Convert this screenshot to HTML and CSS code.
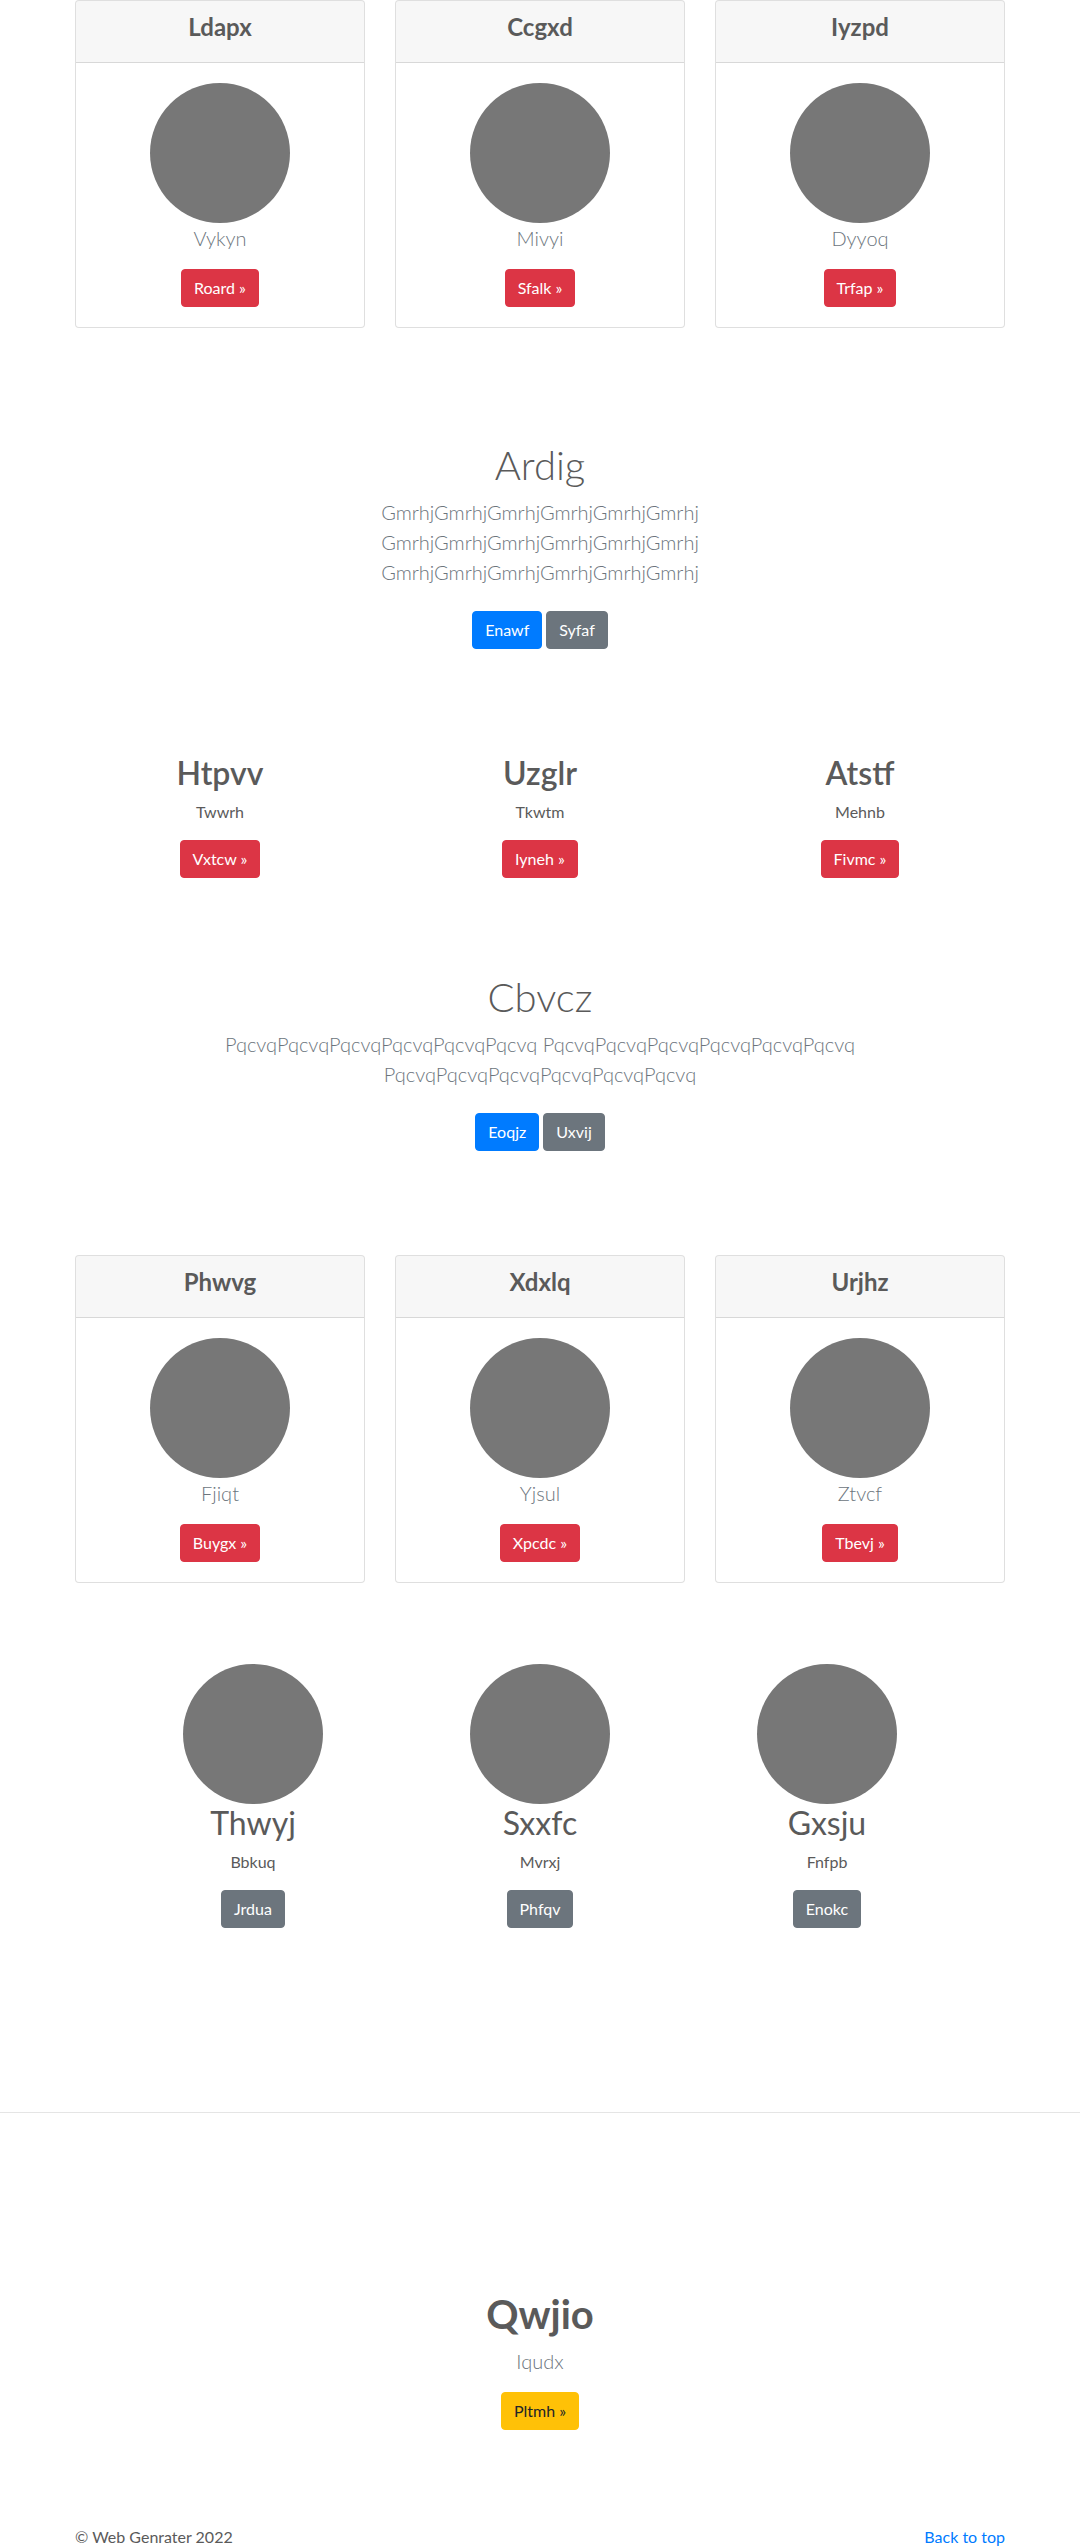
FILE: index.html
```html
<!DOCTYPE html>
<html lang="en">
<head>
<meta charset="utf-8">
<title>Web Genrater</title>
<link rel="stylesheet" href="styles.css">
</head>
<body>
<main>
  <section class="deck deck-first">
    <div class="card">
      <div class="card-header"><h4>Ldapx</h4></div>
      <div class="card-body">
        <div class="avatar"></div>
        <p class="lead muted">Vykyn</p>
        <a class="btn btn-danger" href="#">Roard &raquo;</a>
      </div>
    </div>
    <div class="card">
      <div class="card-header"><h4>Ccgxd</h4></div>
      <div class="card-body">
        <div class="avatar"></div>
        <p class="lead muted">Mivyi</p>
        <a class="btn btn-danger" href="#">Sfalk &raquo;</a>
      </div>
    </div>
    <div class="card">
      <div class="card-header"><h4>Iyzpd</h4></div>
      <div class="card-body">
        <div class="avatar"></div>
        <p class="lead muted">Dyyoq</p>
        <a class="btn btn-danger" href="#">Trfap &raquo;</a>
      </div>
    </div>
  </section>

  <section class="hero hero-first">
    <h1 class="hero-title">Ardig</h1>
    <p class="lead muted hero-text">GmrhjGmrhjGmrhjGmrhjGmrhjGmrhj GmrhjGmrhjGmrhjGmrhjGmrhjGmrhj GmrhjGmrhjGmrhjGmrhjGmrhjGmrhj</p>
    <div class="actions">
      <a class="btn btn-primary" href="#">Enawf</a>
      <a class="btn btn-secondary" href="#">Syfaf</a>
    </div>
  </section>

  <section class="features">
    <div class="feature">
      <h2 class="feature-title">Htpvv</h2>
      <p class="feature-text">Twwrh</p>
      <a class="btn btn-danger" href="#">Vxtcw &raquo;</a>
    </div>
    <div class="feature">
      <h2 class="feature-title">Uzglr</h2>
      <p class="feature-text">Tkwtm</p>
      <a class="btn btn-danger" href="#">Iyneh &raquo;</a>
    </div>
    <div class="feature">
      <h2 class="feature-title">Atstf</h2>
      <p class="feature-text">Mehnb</p>
      <a class="btn btn-danger" href="#">Fivmc &raquo;</a>
    </div>
  </section>

  <section class="hero hero-second">
    <h1 class="hero-title">Cbvcz</h1>
    <p class="lead muted hero-text">PqcvqPqcvqPqcvqPqcvqPqcvqPqcvq PqcvqPqcvqPqcvqPqcvqPqcvqPqcvq PqcvqPqcvqPqcvqPqcvqPqcvqPqcvq</p>
    <div class="actions">
      <a class="btn btn-primary" href="#">Eoqjz</a>
      <a class="btn btn-secondary" href="#">Uxvij</a>
    </div>
  </section>

  <section class="deck deck-second">
    <div class="card">
      <div class="card-header"><h4>Phwvg</h4></div>
      <div class="card-body">
        <div class="avatar"></div>
        <p class="lead muted">Fjiqt</p>
        <a class="btn btn-danger" href="#">Buygx &raquo;</a>
      </div>
    </div>
    <div class="card">
      <div class="card-header"><h4>Xdxlq</h4></div>
      <div class="card-body">
        <div class="avatar"></div>
        <p class="lead muted">Yjsul</p>
        <a class="btn btn-danger" href="#">Xpcdc &raquo;</a>
      </div>
    </div>
    <div class="card">
      <div class="card-header"><h4>Urjhz</h4></div>
      <div class="card-body">
        <div class="avatar"></div>
        <p class="lead muted">Ztvcf</p>
        <a class="btn btn-danger" href="#">Tbevj &raquo;</a>
      </div>
    </div>
  </section>

  <section class="people">
    <div class="person">
      <div class="avatar"></div>
      <h2 class="person-name">Thwyj</h2>
      <p class="person-text">Bbkuq</p>
      <a class="btn btn-secondary" href="#">Jrdua</a>
    </div>
    <div class="person">
      <div class="avatar"></div>
      <h2 class="person-name">Sxxfc</h2>
      <p class="person-text">Mvrxj</p>
      <a class="btn btn-secondary" href="#">Phfqv</a>
    </div>
    <div class="person">
      <div class="avatar"></div>
      <h2 class="person-name">Gxsju</h2>
      <p class="person-text">Fnfpb</p>
      <a class="btn btn-secondary" href="#">Enokc</a>
    </div>
  </section>

  <hr class="divider">

  <section class="cta">
    <h1 class="cta-title">Qwjio</h1>
    <p class="lead muted">Iqudx</p>
    <a class="btn btn-warning" href="#">Pltmh &raquo;</a>
  </section>
</main>

<footer class="footer">
  <p class="copy">&copy; Web Genrater 2022</p>
  <a class="back" href="#">Back to top</a>
</footer>
</body>
</html>
```

FILE: styles.css
```css
* {
  box-sizing: border-box;
}

html, body {
  margin: 0;
  padding: 0;
}

body {
  font-family: Lato, "Open Sans", "Noto Sans", sans-serif;
  font-size: 16px;
  line-height: 24px;
  color: #5a5a5a;
  background: #ffffff;
  min-height: 2547px;
}

h1, h2, h4, p {
  margin: 0;
}

.muted {
  color: #6c757d;
}

.lead {
  font-size: 20px;
  font-weight: 300;
  line-height: 30px;
  margin-bottom: 16px;
}

/* buttons */
.btn {
  display: inline-block;
  font-size: 16px;
  line-height: 24px;
  padding: 6px 12px;
  border: 1px solid transparent;
  border-radius: 4px;
  color: #ffffff;
  text-decoration: none;
  font-weight: 400;
  vertical-align: top;
}

.btn-danger {
  background: #dc3545;
  border-color: #dc3545;
}

.btn-primary {
  background: #007bff;
  border-color: #007bff;
}

.btn-secondary {
  background: #6c757d;
  border-color: #6c757d;
}

.btn-warning {
  background: #ffc107;
  border-color: #ffc107;
  color: #212529;
}

/* avatar placeholder */
.avatar {
  width: 140px;
  height: 140px;
  border-radius: 50%;
  background: #777777;
  margin: 0 auto;
}

/* card decks */
.deck {
  width: 930px;
  margin: 0 auto;
  display: grid;
  grid-template-columns: repeat(3, 1fr);
  column-gap: 30px;
}

.deck-second {
  margin-top: 104px;
}

.card {
  border: 1px solid rgba(0, 0, 0, 0.125);
  border-radius: 4px;
  background: #ffffff;
  overflow: hidden;
}

.card-header {
  background: rgba(0, 0, 0, 0.03);
  border-bottom: 1px solid rgba(0, 0, 0, 0.125);
  padding: 12px 20px;
  text-align: center;
}

.card-header h4 {
  font-size: 24px;
  line-height: 28.8px;
  font-weight: 700;
  margin-bottom: 8px;
  color: #5a5a5a;
}

.card-body {
  padding: 20px;
  text-align: center;
}

/* hero blocks */
.hero {
  text-align: center;
}

.hero-first {
  padding-top: 113px;
}

.hero-second {
  padding-top: 95px;
}

.hero-title {
  font-size: 40px;
  line-height: 48px;
  font-weight: 300;
  margin-bottom: 8px;
}

.hero-text {
  margin: 0 auto 16px;
}

.hero-first .hero-text {
  max-width: 610px;
}

.hero-second .hero-text {
  max-width: 760px;
}

.actions {
  padding-top: 8px;
  display: flex;
  justify-content: center;
  gap: 4px;
}

/* features */
.features {
  width: 960px;
  margin: 105px auto 0;
  display: grid;
  grid-template-columns: repeat(3, 1fr);
  text-align: center;
}

.feature-title {
  font-size: 32px;
  line-height: 38px;
  font-weight: 600;
  margin-bottom: 8px;
}

.feature-text {
  margin-bottom: 16px;
}

/* people */
.people {
  width: 861px;
  margin: 81px auto 0;
  display: grid;
  grid-template-columns: repeat(3, 1fr);
  text-align: center;
}

.person-name {
  font-size: 32px;
  line-height: 38px;
  font-weight: 400;
  margin-bottom: 8px;
}

.person-text {
  margin-bottom: 16px;
}

/* divider */
.divider {
  margin: 184px 0 0;
  border: 0;
  border-top: 1px solid #e5e5e5;
  height: 0;
}

/* call to action */
.cta {
  text-align: center;
  padding-top: 177px;
}

.cta-title {
  font-size: 40px;
  line-height: 48px;
  font-weight: 700;
  margin-bottom: 8px;
}

/* footer */
.footer {
  width: 930px;
  margin: 95px auto 0;
  display: flex;
  justify-content: space-between;
  align-items: flex-start;
}

.copy {
  margin: 0 0 16px;
}

.back {
  color: #007bff;
  text-decoration: none;
}
```
